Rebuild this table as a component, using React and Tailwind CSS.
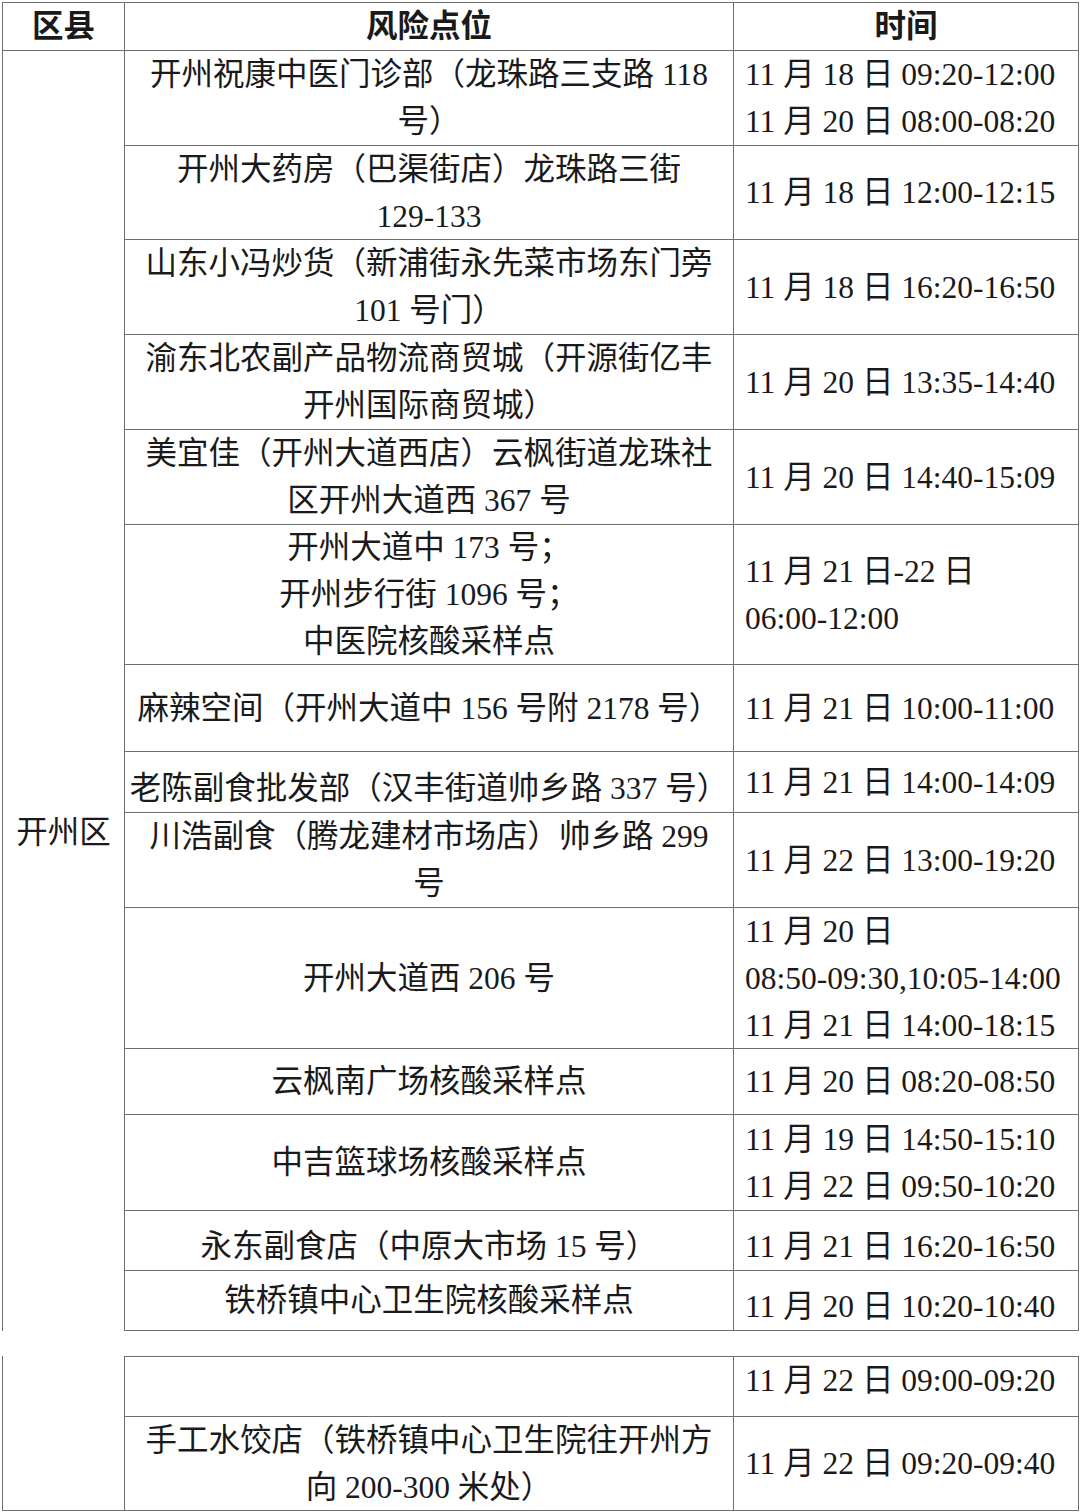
import React from "react";

const rows = [
  {
    h: "h-[95px]",
    place: ["开州祝康中医门诊部（龙珠路三支路 118", "号）"],
    time: ["11 月 18 日 09:20-12:00", "11 月 20 日 08:00-08:20"],
  },
  {
    h: "h-[94px]",
    place: ["开州大药房（巴渠街店）龙珠路三街", "129-133"],
    time: ["11 月 18 日 12:00-12:15"],
  },
  {
    h: "h-[95px]",
    place: ["山东小冯炒货（新浦街永先菜市场东门旁", "101 号门）"],
    time: ["11 月 18 日 16:20-16:50"],
  },
  {
    h: "h-[95px]",
    place: ["渝东北农副产品物流商贸城（开源街亿丰", "开州国际商贸城）"],
    time: ["11 月 20 日 13:35-14:40"],
  },
  {
    h: "h-[95px]",
    place: ["美宜佳（开州大道西店）云枫街道龙珠社", "区开州大道西 367 号"],
    time: ["11 月 20 日 14:40-15:09"],
  },
  {
    h: "h-[140px]",
    place: ["开州大道中 173 号；", "开州步行街 1096 号；", "中医院核酸采样点"],
    time: ["11 月 21 日-22 日", "06:00-12:00"],
  },
  {
    h: "h-[87px]",
    place: ["麻辣空间（开州大道中 156 号附 2178 号）"],
    time: ["11 月 21 日 10:00-11:00"],
  },
  {
    h: "h-[61px]",
    place: ["老陈副食批发部（汉丰街道帅乡路 337 号）"],
    placeCls: "pt-[12px]",
    time: ["11 月 21 日 14:00-14:09"],
  },
  {
    h: "h-[95px]",
    place: ["川浩副食（腾龙建材市场店）帅乡路 299", "号"],
    time: ["11 月 22 日 13:00-19:20"],
  },
  {
    h: "h-[141px]",
    place: ["开州大道西 206 号"],
    time: ["11 月 20 日", "08:50-09:30,10:05-14:00", "11 月 21 日 14:00-18:15"],
  },
  {
    h: "h-[66px]",
    place: ["云枫南广场核酸采样点"],
    time: ["11 月 20 日 08:20-08:50"],
  },
  {
    h: "h-[96px]",
    place: ["中吉篮球场核酸采样点"],
    time: ["11 月 19 日 14:50-15:10", "11 月 22 日 09:50-10:20"],
  },
  {
    h: "h-[60px]",
    place: ["永东副食店（中原大市场 15 号）"],
    placeCls: "pt-[12px]",
    time: ["11 月 21 日 16:20-16:50"],
    timeCls: "pt-[12px]",
  },
  {
    h: "h-[60px]",
    place: ["铁桥镇中心卫生院核酸采样点"],
    time: ["11 月 20 日 10:20-10:40"],
    timeCls: "pt-[12px]",
  },
];

const rows2 = [
  {
    h: "h-[60px]",
    place: [],
    time: ["11 月 22 日 09:00-09:20"],
    timeCls: "pb-[12px]",
  },
  {
    h: "h-[94px]",
    place: ["手工水饺店（铁桥镇中心卫生院往开州方", "向 200-300 米处）"],
    time: ["11 月 22 日 09:20-09:40"],
  },
];

const Row = ({ row }) => (
  <div className={`flex border-b border-[#6f6f6f] ${row.h}`}>
    <div
      className={`w-[609px] shrink-0 border-r border-[#6f6f6f] flex flex-col items-center justify-center text-center ${row.placeCls || ""}`}
    >
      {row.place.map((line, i) => (
        <div key={i} className="whitespace-nowrap">
          {line}
        </div>
      ))}
    </div>
    <div
      className={`w-[345px] shrink-0 border-r border-[#6f6f6f] flex flex-col items-start justify-center pl-[11px] ${row.timeCls || ""}`}
    >
      {row.time.map((line, i) => (
        <div key={i} className="whitespace-nowrap">
          {line}
        </div>
      ))}
    </div>
  </div>
);

export default function App() {
  return (
    <div className="w-[1080px] h-[1512px] bg-white overflow-hidden text-[#1a1a1a] text-[31.5px] leading-[47px] font-['Liberation_Serif','Noto_Sans_CJK_SC',serif]">
      {/* first page of the table */}
      <div className="ml-[2px] mt-[2px] w-[1077px] border-l border-t border-[#6f6f6f]">
        <div className="flex h-[48px] border-b border-[#6f6f6f] font-bold">
          <div className="w-[122px] shrink-0 border-r border-[#6f6f6f] flex items-center justify-center">
            区县
          </div>
          <div className="w-[609px] shrink-0 border-r border-[#6f6f6f] flex items-center justify-center">
            风险点位
          </div>
          <div className="w-[345px] shrink-0 border-r border-[#6f6f6f] flex items-center justify-center">
            时间
          </div>
        </div>
        <div className="flex">
          <div className="w-[122px] shrink-0 border-r border-[#6f6f6f] flex justify-center pt-[758px]">
            开州区
          </div>
          <div className="flex flex-col">
            {rows.map((row, i) => (
              <Row key={i} row={row} />
            ))}
          </div>
        </div>
      </div>

      {/* continued on next page */}
      <div className="ml-[2px] mt-[25px] w-[1077px] flex border-l border-[#6f6f6f]">
        <div className="w-[122px] shrink-0 border-r border-b border-[#6f6f6f]" />
        <div className="flex flex-col border-t border-[#6f6f6f]">
          {rows2.map((row, i) => (
            <Row key={i} row={row} />
          ))}
        </div>
      </div>
    </div>
  );
}
